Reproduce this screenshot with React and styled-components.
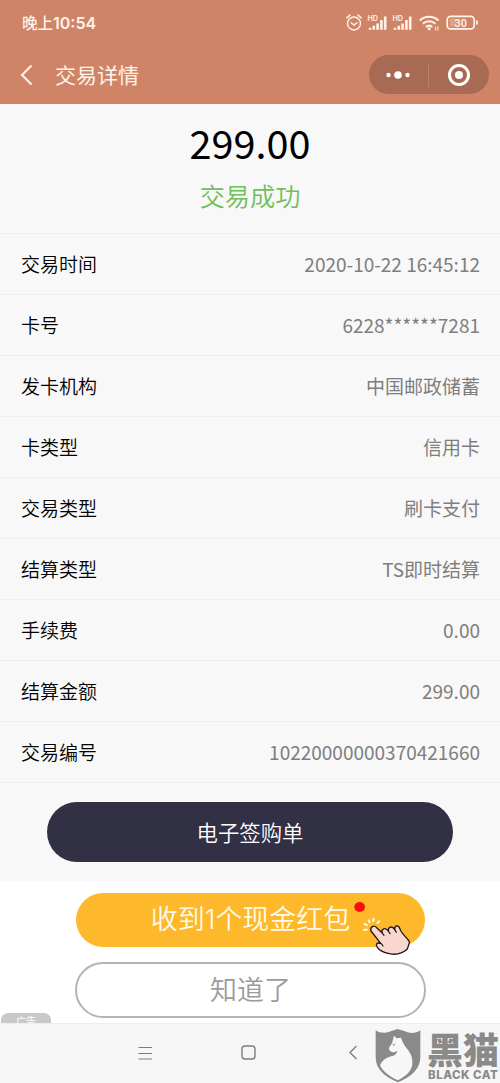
import React from 'react';
import styled, { createGlobalStyle } from 'styled-components';

const GlobalStyle = createGlobalStyle`
  * {
    box-sizing: border-box;
  }

  body {
    margin: 0;
    background: #ffffff;
    font-family: 'Noto Sans CJK SC', sans-serif;
  }
`;

const Screen = styled.div`
  position: relative;
  display: flex;
  flex-direction: column;
  width: 500px;
  height: 1083px;
  overflow: hidden;
`;

const Header = styled.header`
  height: 104px;
  background: #d08467;
  color: #fff3ea;
`;

const StatusBar = styled.div`
  display: flex;
  align-items: center;
  justify-content: space-between;
  height: 45px;
  padding: 0 21px 0 22px;
`;

const Clock = styled.span`
  font-size: 15.5px;
  font-weight: 500;
  line-height: 20px;
`;

const ClockDigits = styled.span`
  font-family: Inter, sans-serif;
  font-size: 16px;
  font-weight: 600;
`;

const StatusIcons = styled.svg`
  display: block;
`;

const TitleBar = styled.div`
  display: flex;
  align-items: center;
  height: 59px;
  padding: 0 11px 0 20px;
`;

const BackIcon = styled.svg`
  margin-right: 22px;
`;

const Title = styled.h1`
  flex: 1;
  margin: 0;
  padding-bottom: 2px;
  font-size: 21px;
  font-weight: 400;
  line-height: 30px;
`;

const Capsule = styled.div`
  display: flex;
  align-items: center;
  width: 120px;
  height: 39px;
  border-radius: 20px;
  background: #a86a53;
`;

const CapsuleButton = styled.button`
  display: flex;
  flex: ${(props) => (props.$divided ? '61' : '59')};
  align-items: center;
  justify-content: center;
  height: 24px;
  padding: 0;
  border: 0;
  border-left: ${(props) => (props.$divided ? '1px solid #b98069' : '0')};
  background: none;
`;

const Details = styled.main`
  height: 777px;
  background: #f8f8f8;
`;

const Summary = styled.section`
  display: flex;
  flex-direction: column;
  align-items: center;
  height: 129px;
  padding-top: 12px;
`;

const Amount = styled.div`
  color: #000000;
  font-size: 39.6px;
  line-height: 52px;
`;

const Result = styled.div`
  margin-top: 9px;
  color: #6dc05b;
  font-size: 25.2px;
  font-weight: 350;
  line-height: 36px;
`;

const List = styled.dl`
  margin: 0;
  border-bottom: 1px solid #eeeeee;
`;

const Row = styled.div`
  display: flex;
  align-items: center;
  justify-content: space-between;
  height: 61px;
  padding: 0 20px 0 21px;
  border-top: 1px solid #eeeeee;
  font-size: 19px;
  line-height: 28px;
`;

const Label = styled.dt`
  color: #000000;
  font-weight: 350;
`;

const Value = styled.dd`
  margin: 0;
  color: #7e7e7e;
`;

const ReceiptButton = styled.button`
  display: block;
  width: 406px;
  height: 60px;
  margin: 19px 0 0 47px;
  padding: 0 0 2px;
  border: 0;
  border-radius: 30px;
  background: #313045;
  color: #ffffff;
  font-family: inherit;
  font-size: 21.4px;
  font-weight: 350;
`;

const Promo = styled.section`
  position: relative;
  display: flex;
  flex-direction: column;
  align-items: center;
  height: 142px;
  padding: 12px 0 0 1px;
  background: #ffffff;
`;

const PromoButton = styled.button`
  flex-shrink: 0;
  width: ${(props) => (props.$outlined ? '351px' : '349px')};
  height: ${(props) => (props.$outlined ? '56px' : '54px')};
  margin-bottom: 15px;
  padding: 0 0 2px;
  border: ${(props) => (props.$outlined ? '2px solid #b4b4b4' : '0')};
  border-radius: 28px;
  background: ${(props) => (props.$outlined ? '#ffffff' : '#fdb92b')};
  color: ${(props) => (props.$outlined ? '#9b9b9b' : '#fffbe8')};
  font-family: inherit;
  font-size: 27px;
  font-weight: 350;
  line-height: 38px;
`;

const Digit = styled.span`
  font-family: Inter, sans-serif;
  font-size: 27px;
  font-weight: 300;
`;

const Hand = styled.svg`
  position: absolute;
  top: 19px;
  left: 350px;
`;

const AdTag = styled.span`
  position: absolute;
  bottom: 0;
  left: 1px;
  width: 50px;
  height: 10px;
  overflow: hidden;
  border-radius: 7px 7px 0 0;
  background: #c9c9c9;
  color: #ffffff;
  font-size: 10px;
  line-height: 15px;
  text-align: center;
`;

const NavBar = styled.nav`
  display: flex;
  align-items: center;
  gap: 88px;
  height: 60px;
  padding: 0 0 2px 137px;
  border-top: 1px solid #eeeeee;
  background: #f6f6f6;
`;

const NavBack = styled.svg`
  margin-left: 4px;
`;

const Watermark = styled.div`
  position: absolute;
  right: 0;
  bottom: 0;
  display: flex;
  width: 125px;
  height: 54px;
  color: #8a8a8a;
`;

const Brand = styled.div`
  display: flex;
  flex-direction: column;
  width: 73px;
  margin-left: 6px;
`;

const BrandName = styled.span`
  font-size: 36px;
  font-weight: 900;
  line-height: 38px;
  white-space: nowrap;
`;

const BrandLatin = styled.span`
  padding-left: 1px;
  font-family: Inter, sans-serif;
  font-size: 11.5px;
  font-weight: 800;
  line-height: 16px;
  letter-spacing: 0.5px;
  white-space: nowrap;
`;

const rows = [
  { label: '交易时间', value: '2020-10-22 16:45:12' },
  { label: '卡号', value: '6228******7281' },
  { label: '发卡机构', value: '中国邮政储蓄' },
  { label: '卡类型', value: '信用卡' },
  { label: '交易类型', value: '刷卡支付' },
  { label: '结算类型', value: 'TS即时结算' },
  { label: '手续费', value: '0.00' },
  { label: '结算金额', value: '299.00' },
  { label: '交易编号', value: '10220000000370421660' },
];

function Signal({ x }) {
  return (
    <g transform={`translate(${x} 0)`}>
      <text x="0" y="7.5" fontSize="7.2" fontWeight="600" fontFamily="Inter, sans-serif" fill="currentColor">
        HD
      </text>
      <path
        d="M2.5 16.8v-2M6.3 16.8v-4M10.1 16.8v-6.2M13.9 16.8v-9.8M17.7 16.8v-13.3"
        stroke="currentColor"
        strokeWidth="2.6"
      />
    </g>
  );
}

function StatusGlyphs() {
  return (
    <StatusIcons width="133" height="20" viewBox="0 0 133 20" fill="none">
      <g stroke="currentColor" strokeWidth="1.4" strokeLinecap="round">
        <circle cx="8" cy="10.5" r="6.5" />
        <path d="M5.2 9.7l2.8 2.3 3-2.3M.8 4.9l3.2-2.8M15.2 4.9L12 2.1" />
      </g>
      <Signal x={21.5} />
      <Signal x={46.5} />
      <g stroke="currentColor" strokeWidth="2">
        <path d="M73.7 7.5c5.3-5 13.5-5 18.8 0M76.8 10.8c3.6-3.3 9-3.3 12.6 0M79.9 14c2-1.7 4.4-1.7 6.4 0" />
      </g>
      <circle cx="83.1" cy="15.8" r="1.5" fill="currentColor" />
      <path d="M89.7 13.5v4M91.9 13.5v4" stroke="currentColor" strokeWidth="1" />
      <rect x="101.2" y="3.3" width="27" height="12.6" rx="3.5" stroke="currentColor" strokeWidth="1.7" />
      <rect x="103.5" y="5.6" width="7" height="8" fill="#dda38a" />
      <path d="M130.9 7.5v4" stroke="currentColor" strokeWidth="1.8" />
      <text
        x="114.7"
        y="13.6"
        textAnchor="middle"
        fontSize="10.8"
        fontWeight="600"
        fontFamily="Roboto, sans-serif"
        fill="currentColor"
      >
        30
      </text>
    </StatusIcons>
  );
}

function PointingHand() {
  return (
    <Hand width="63" height="58" viewBox="90 60 189 174" fill="none">
      <ellipse cx="119" cy="81" rx="16" ry="15" fill="#fb0d0c" />
      <path
        d="M129 149h14M132 131l11 6M145 119l5 10M161 114l-2 12M179 122l-8 9"
        stroke="#fffbe0"
        strokeWidth="6"
      />
      <path
        d="M153 153C149 140 162 134 170 143L186 158C184 146 196 141 205 153C204 139 217 137 224 149C223 136 236 133 240 147C242 158 256 168 268 184C270 190 264 198 262 207C245 222 225 225 208 221C190 217 178 211 172 202C167 195 169 188 177 189L182 190Z"
        fill="#f8d7ce"
        stroke="#211719"
        strokeWidth="4"
        strokeLinejoin="round"
      />
      <path
        d="M186 158l6 8M205 153l5 8M224 149l5 8M177 189c6 0 10 4 12 9"
        stroke="#211719"
        strokeWidth="3.5"
        strokeLinecap="round"
      />
    </Hand>
  );
}

function CatLogo() {
  return (
    <svg width="46" height="54" viewBox="46 43 138 162">
      <path
        d="M48 47c14 10 31 9 45 3l21-7 22 7c16 7 32 7 46-3v79c0 37-25 58-67 77-43-19-67-41-67-77z"
        fill="#8a8a8a"
      />
      <path
        d="M103 63C106 66 109 68 111 71L124 69C128 80 132 90 141 101C153 116 160 130 158 148C156 170 138 185 115 197C92 187 70 172 61 152C68 135 82 128 98 124C108 121 112 116 113 108C106 113 97 114 92 110C90 106 87 104 88 99L98 84C99 76 101 70 103 63Z"
        fill="#f7f7f7"
      />
      <path d="M98 91l9-5-3 7z" fill="#8a8a8a" />
    </svg>
  );
}

export default function App() {
  return (
    <Screen>
      <GlobalStyle />
      <Header>
        <StatusBar>
          <Clock>
            晚上<ClockDigits>10:54</ClockDigits>
          </Clock>
          <StatusGlyphs />
        </StatusBar>
        <TitleBar>
          <BackIcon width="13" height="22" viewBox="0 0 13 22" fill="none">
            <path d="M11.5 1.5L2 11l9.5 9.5" stroke="currentColor" strokeWidth="2" />
          </BackIcon>
          <Title>交易详情</Title>
          <Capsule>
            <CapsuleButton>
              <svg width="24" height="8" viewBox="0 0 24 8" fill="#ffffff">
                <circle cx="2.5" cy="4" r="2.2" />
                <circle cx="12" cy="4" r="3.8" />
                <circle cx="21.5" cy="4" r="2.2" />
              </svg>
            </CapsuleButton>
            <CapsuleButton $divided>
              <svg width="22" height="22" viewBox="0 0 22 22">
                <circle cx="11" cy="11" r="9.5" fill="none" stroke="#ffffff" strokeWidth="3" />
                <circle cx="11" cy="11" r="4" fill="#ffffff" />
              </svg>
            </CapsuleButton>
          </Capsule>
        </TitleBar>
      </Header>
      <Details>
        <Summary>
          <Amount>299.00</Amount>
          <Result>交易成功</Result>
        </Summary>
        <List>
          {rows.map((row) => (
            <Row key={row.label}>
              <Label>{row.label}</Label>
              <Value>{row.value}</Value>
            </Row>
          ))}
        </List>
        <ReceiptButton>电子签购单</ReceiptButton>
      </Details>
      <Promo>
        <PromoButton>
          收到<Digit>1</Digit>个现金红包
        </PromoButton>
        <PromoButton $outlined>知道了</PromoButton>
        <PointingHand />
        <AdTag>广告</AdTag>
      </Promo>
      <NavBar>
        <svg width="16" height="14" viewBox="0 0 16 14">
          <path d="M1.5 1.5h13.5M1.5 7.5h13.5M1.5 13h13.5" stroke="#7d7d7d" strokeWidth="1.2" />
        </svg>
        <svg width="15" height="15" viewBox="0 0 15 15" fill="none">
          <rect x="1" y="1" width="13" height="13" rx="3" stroke="#7d7d7d" strokeWidth="1.4" />
        </svg>
        <NavBack width="10" height="15" viewBox="0 0 10 15" fill="none">
          <path d="M8.5 1L2 7.5 8.5 14" stroke="#7d7d7d" strokeWidth="1.3" />
        </NavBack>
      </NavBar>
      <Watermark>
        <CatLogo />
        <Brand>
          <BrandName>黑猫</BrandName>
          <BrandLatin>BLACK CAT</BrandLatin>
        </Brand>
      </Watermark>
    </Screen>
  );
}
